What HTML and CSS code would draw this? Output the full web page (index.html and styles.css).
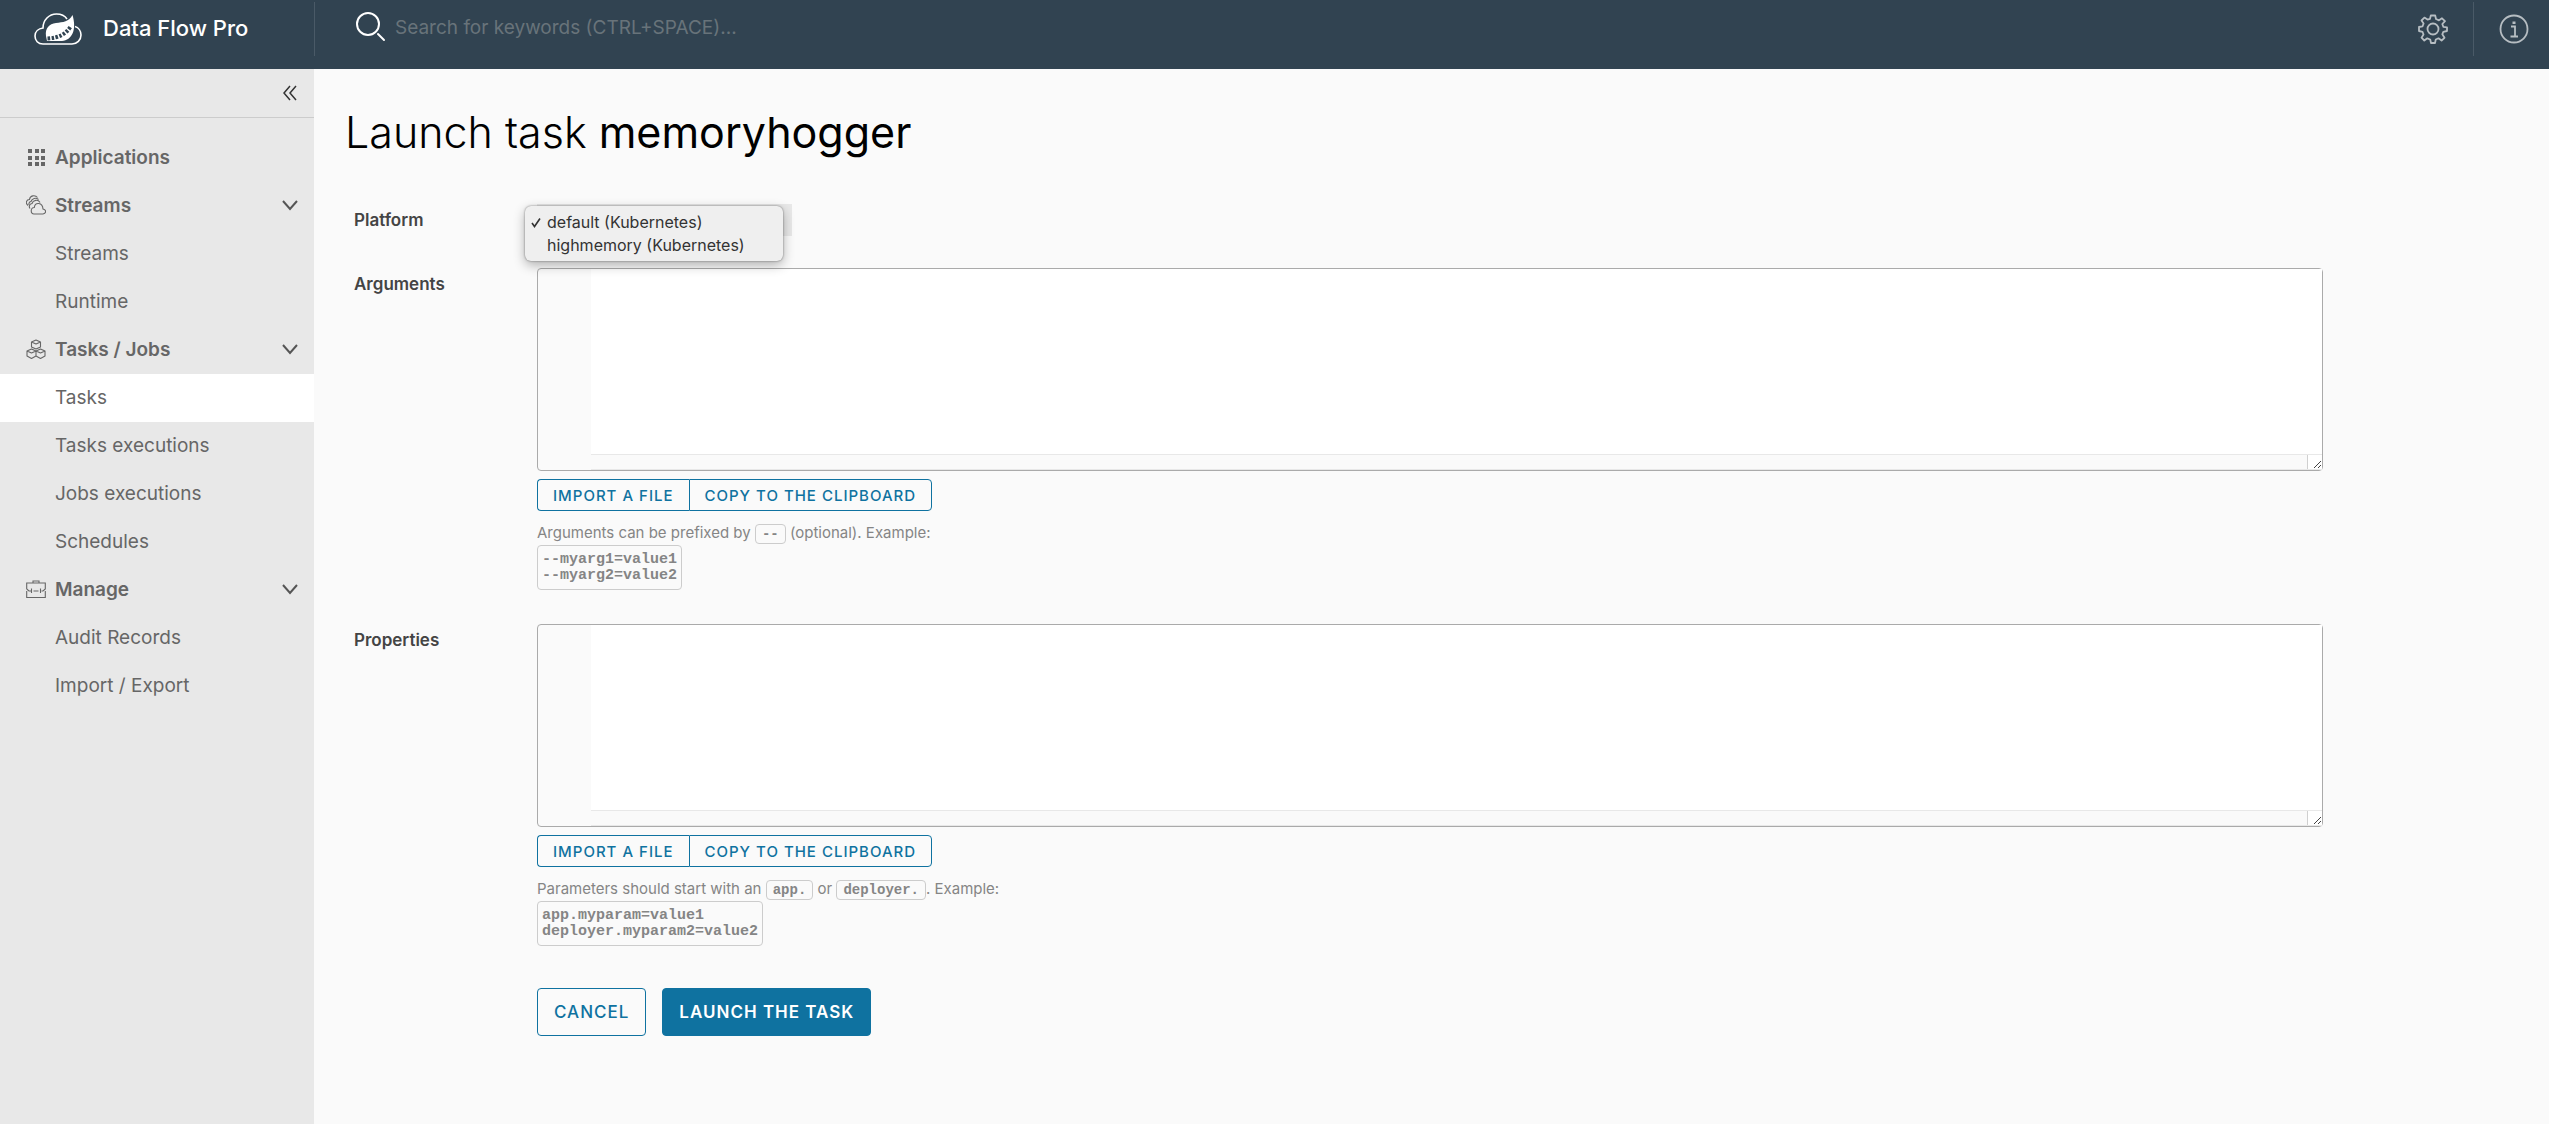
FILE: index.html
```html
<!DOCTYPE html>
<html lang="en">
<head>
<meta charset="utf-8">
<meta name="viewport" content="width=device-width, initial-scale=1">
<title>Launch task memoryhogger</title>
<link rel="stylesheet" href="styles.css">
</head>
<body>
<header class="header">
  <a class="brand" href="#">
    <svg class="logo" viewBox="0 0 48 32" aria-hidden="true">
      <path d="M9 31H38C43 31 47 27 47 22C47 18 44.500 14.500 41 13.500M9 31C4 31 1 27.500 1 23C1 18.500 4.500 15.500 9 15C9 7 15 1 22.500 1C27 1 31 3 33 6" fill="none" stroke="#fff" stroke-width="1.600"/>
      <path d="M38.500 2C35 9 29 9 22 10C15 11 11 15 12 23L13 28H28C38 27 43 17 38.500 2Z" fill="#fff"/>
      <path d="M13.500 25.500C25 25 32 21 37 13" fill="none" stroke="#314351" stroke-width="4" stroke-dasharray="2.500 1.500"/>
    </svg>
    <span>Data Flow Pro</span>
  </a>
  <label class="search">
    <svg viewBox="0 0 30 30" aria-label="Search"><g fill="none" stroke="#fff" stroke-width="2" stroke-linecap="round"><circle cx="12" cy="12" r="11"/><path d="M22 22L28 28"/></g></svg>
    <input type="search" placeholder="Search for keywords (CTRL+SPACE)...">
  </label>
  <button class="header-action" aria-label="Settings">
    <svg viewBox="0 0 30 30"><g fill="none" stroke="#b6bdc2" stroke-width="1.800" stroke-linejoin="round"><circle cx="15" cy="15" r="5.500"/><path d="M12.800 1.500H17.200L18 5L21 6.300L24 4.300L27 7.200L24.300 10L25.300 12.800L29 13.300V17L25.300 17.800L24.300 20.300L26.500 23.800L23.600 26.500L20.500 24.300L17.800 25.500L17 29H13L12.200 25.500L9.300 24.300L6.300 26.500L3.500 23.700L5.500 20.500L4.500 17.800L1 17V13L4.500 12.300L5.600 9.500L3.500 6.500L6.400 3.600L9.500 5.600L12 4.800Z"/></g></svg>
  </button>
  <button class="header-action" aria-label="About">
    <svg viewBox="0 0 30 30"><g fill="none" stroke="#b6bdc2" stroke-width="1.800"><circle cx="15" cy="15" r="13.500"/><path d="M12 12.500H16V22.500M11.500 22.500H19"/></g><path d="M13.500 7.500H16.500V10H13.500Z" fill="#b6bdc2"/></svg>
  </button>
</header>
<div class="layout">
  <nav class="sidebar" aria-label="Main">
    <div class="collapse">
      <button aria-label="Collapse menu"><svg viewBox="0 0 16 16"><path d="M8 1L2 8L8 15M14 1L8 8L14 15" fill="none" stroke="#333" stroke-width="1.500"/></svg></button>
    </div>
    <ul class="menu">
      <li><a class="group" href="#"><svg viewBox="0 0 20 20"><path d="M2 2h4v4h-4zM9 2h4v4h-4zM15 2h4v4h-4zM2 9h4v4h-4zM9 9h4v4h-4zM15 9h4v4h-4zM2 15h4v4h-4zM9 15h4v4h-4zM15 15h4v4h-4z" fill="#666"/></svg>Applications</a></li>
      <li><a class="group" href="#"><svg viewBox="0 0 20 20"><g fill="none" stroke="#666" stroke-width="1.100"><path d="M8 19H17C20.500 18.500 20.500 14.500 17 14C16.500 7 9 7 8.300 12.500C4 12.500 4.500 19 8 19Z"/><path d="M4 13.500C2.500 11.500 3.500 9 6 8.500C7 5 12 4 14 7.500M2 10.500C-1 8 .5 4.500 3.500 4.500C4 .5 9 -.5 11.500 2.500"/><path d="M3 10C2.500 7.500 4 6.500 5 6.500C6 3 10 2.500 12.500 4.500"/></g></svg>Streams<svg class="caret" viewBox="0 0 16 16"><path d="M1 4L8 12L15 4" fill="none" stroke="#555" stroke-width="2"/></svg></a></li>
      <li><a href="#">Streams</a></li>
      <li><a href="#">Runtime</a></li>
      <li><a class="group" href="#"><svg viewBox="0 0 20 20"><g fill="none" stroke="#666" stroke-width="1.100" stroke-linejoin="round"><path d="M10 1L14.500 3V8L10 10L5.500 8V3ZM5.500 3L10 5L14.500 3M5.500 10L10 12V17L5.500 19.500L1 17V12ZM1 12L5.500 14L10 12M14.500 10L19 12V17L14.500 19.500L10 17V12ZM10 12L14.500 14L19 12"/></g></svg>Tasks / Jobs<svg class="caret" viewBox="0 0 16 16"><path d="M1 4L8 12L15 4" fill="none" stroke="#555" stroke-width="2"/></svg></a></li>
      <li><a class="active" href="#" aria-current="page">Tasks</a></li>
      <li><a href="#">Tasks executions</a></li>
      <li><a href="#">Jobs executions</a></li>
      <li><a href="#">Schedules</a></li>
      <li><a class="group" href="#"><svg viewBox="0 0 20 20"><g fill="none" stroke="#666" stroke-width="1.100"><path d="M.7 10V4H19.300V10L17 12H15.500M.7 10L3 12H5M.7 12V18.500H19.300V12M7 4V2H13V4M5.500 9.500V14M14.500 9.500V14M7.500 12H12.500"/></g></svg>Manage<svg class="caret" viewBox="0 0 16 16"><path d="M1 4L8 12L15 4" fill="none" stroke="#555" stroke-width="2"/></svg></a></li>
      <li><a href="#">Audit Records</a></li>
      <li><a href="#">Import / Export</a></li>
    </ul>
  </nav>
  <main class="content">
    <h1>Launch task <strong>memoryhogger</strong></h1>
    <form class="form">
      <div class="row">
        <label class="label" for="platform">Platform</label>
        <div class="platform">
          <select id="platform"><option>default (Kubernetes)</option><option>highmemory (Kubernetes)</option></select>
          <ul class="options" role="listbox" aria-label="Platform">
            <li role="option" aria-selected="true"><svg viewBox="0 0 10 10"><path d="M1 5.500L3.500 9L9 1" fill="none" stroke="#333" stroke-width="1.600"/></svg>default (Kubernetes)</li>
            <li role="option" aria-selected="false">highmemory (Kubernetes)</li>
          </ul>
        </div>
      </div>
      <div class="row">
        <label class="label" for="arguments">Arguments</label>
        <div>
          <div class="editor">
            <textarea id="arguments"></textarea>
            <div class="scrollbar"><svg viewBox="0 0 14 14"><path d="M6 13L13 6M10 13L13 10" stroke="#444" stroke-width="1"/></svg></div>
          </div>
          <div class="button-group"><button type="button">IMPORT A FILE</button><button type="button">COPY TO THE CLIPBOARD</button></div>
          <p class="hint">Arguments can be prefixed by <code>--</code> (optional). Example:</p>
          <pre>--myarg1=value1
--myarg2=value2</pre>
        </div>
      </div>
      <div class="row">
        <label class="label" for="properties">Properties</label>
        <div>
          <div class="editor">
            <textarea id="properties"></textarea>
            <div class="scrollbar"><svg viewBox="0 0 14 14"><path d="M6 13L13 6M10 13L13 10" stroke="#444" stroke-width="1"/></svg></div>
          </div>
          <div class="button-group"><button type="button">IMPORT A FILE</button><button type="button">COPY TO THE CLIPBOARD</button></div>
          <p class="hint">Parameters should start with an <code>app.</code> or <code>deployer.</code>. Example:</p>
          <pre>app.myparam=value1
deployer.myparam2=value2</pre>
        </div>
      </div>
      <div class="row">
        <div class="actions"><button type="button">CANCEL</button><button type="submit" class="primary">LAUNCH THE TASK</button></div>
      </div>
    </form>
  </main>
</div>
</body>
</html>
```
FILE: styles.css
```css
* { box-sizing: border-box; }
body {
  margin: 0;
  min-height: 100vh;
  display: flex;
  flex-direction: column;
  background: #fafafa;
  color: #000;
  font-family: Inter, "Liberation Sans", sans-serif;
  font-size: 19px;
}
button, input, select, textarea { font: inherit; }
button { cursor: pointer; }
ul { list-style: none; margin: 0; padding: 0; }
a { color: inherit; text-decoration: none; }
svg { flex: none; display: block; }

.header {
  display: flex;
  align-items: flex-start;
  height: 69px;
  padding-top: 2px;
  background: #314351;
}
.brand {
  display: flex;
  align-items: center;
  gap: 21px;
  width: 315px;
  height: 54px;
  padding-left: 34px;
  border-right: 1px solid #4a5a67;
  color: #fff;
  font-size: 22px;
  font-weight: 500;
}
.brand span { padding-bottom: 2px; }
.logo { width: 48px; height: 32px; }
.search {
  flex: 1;
  display: flex;
  align-items: center;
  gap: 9px;
  height: 50px;
  padding-left: 41px;
}
.search svg { width: 30px; height: 30px; }
.search input {
  width: 400px;
  padding: 0;
  border: 0;
  outline: 0;
  background: none;
  color: #fff;
}
.search input::placeholder { color: #68737a; opacity: 1; }
.header-action {
  width: 80px;
  height: 54px;
  padding: 0 0 0 25px;
  border: 0;
  background: none;
}
.header-action + .header-action { border-left: 1px solid #4a5a67; width: 76px; }
.header-action svg { width: 30px; height: 30px; }

.layout { flex: 1; display: flex; }
.sidebar { flex: none; width: 314px; background: #e8e8e8; }
.collapse {
  display: flex;
  justify-content: flex-end;
  align-items: center;
  height: 49px;
  padding-right: 15px;
  border-bottom: 1px solid #ccc;
}
.collapse button { padding: 0; border: 0; background: none; }
.collapse svg { width: 18px; height: 16px; }
.menu { padding-top: 16px; color: #666; }
.menu a {
  display: flex;
  align-items: center;
  height: 48px;
  padding: 0 16px 2px 55px;
}
.menu .group { gap: 9px; padding-left: 26px; font-weight: 600; }
.menu .group svg { width: 20px; height: 20px; }
.menu .group .caret { width: 16px; height: 16px; margin-left: auto; }
.menu .active { background: #fff; }

.content { flex: 1; min-width: 0; padding: 37px 0 40px 31px; }
h1 {
  margin: 0;
  font-size: 43px;
  line-height: 52px;
  font-weight: 300;
}
h1 strong { font-weight: 400; }
.form { padding: 46px 0 0 9px; }
.row { display: grid; grid-template-columns: 183px 79fr 10fr; }
.label { padding-top: 4px; color: #444; font-size: 17px; line-height: 24px; font-weight: 600; }
.platform { position: relative; height: 64px; }
.platform select {
  appearance: none;
  width: 255px;
  height: 32px;
  border: 0;
  background: #e8e8e8;
  color: #444;
}
.options {
  position: absolute;
  top: 2px;
  left: -12px;
  width: 258px;
  padding: 5px 0 4px;
  border-radius: 6px;
  background: #efefef;
  box-shadow: 0 0 2px rgba(0, 0, 0, .5), 0 4px 12px rgba(0, 0, 0, .3);
  color: #333;
  font-size: 16px;
}
.options li { position: relative; padding-left: 22px; line-height: 23px; }
.options svg { position: absolute; left: 6px; top: 6px; width: 10px; height: 11px; }

.editor {
  height: 203px;
  padding-left: 53px;
  display: flex;
  flex-direction: column;
  border: 1px solid #aaa;
  border-radius: 4px;
}
.editor textarea {
  flex: 1;
  padding: 4px;
  border: 0;
  outline: 0;
  resize: none;
  background: #fff;
}
.scrollbar {
  display: flex;
  justify-content: flex-end;
  height: 16px;
  border: solid #e8e8e8;
  border-width: 1px 0;
}
.scrollbar svg { width: 15px; height: 14px; border-left: 1px solid #d0d0d0; background: #fff; }
.button-group { display: flex; margin-top: 8px; }
.button-group button, .actions button {
  border: 1px solid #0f72a0;
  border-radius: 4px;
  background: none;
  color: #0f72a0;
  font-weight: 500;
  letter-spacing: 1px;
  white-space: nowrap;
}
.button-group button { height: 32px; padding: 0 15px; font-size: 15px; }
.button-group button:first-child { border-right: 0; border-radius: 4px 0 0 4px; }
.button-group button:last-child { border-radius: 0 4px 4px 0; }
.hint { margin: 11px 0 0; color: #858585; font-size: 15px; line-height: 22px; }
code, pre {
  border: 1px solid #ccc;
  border-radius: 4px;
  color: #858585;
  font-family: "Liberation Mono", monospace;
  font-weight: 700;
}
code { padding: 1px 6px; font-size: 14px; }
pre {
  width: max-content;
  margin: 0 0 34px;
  padding: 6px 4px 5px;
  font-size: 15px;
  line-height: 16px;
}
.actions { grid-column: 2; display: flex; gap: 16px; padding-top: 8px; }
.actions button { height: 48px; padding: 0 16px; font-size: 17px; }
.actions .primary { background: #0f72a0; color: #fff; font-weight: 600; }
```
